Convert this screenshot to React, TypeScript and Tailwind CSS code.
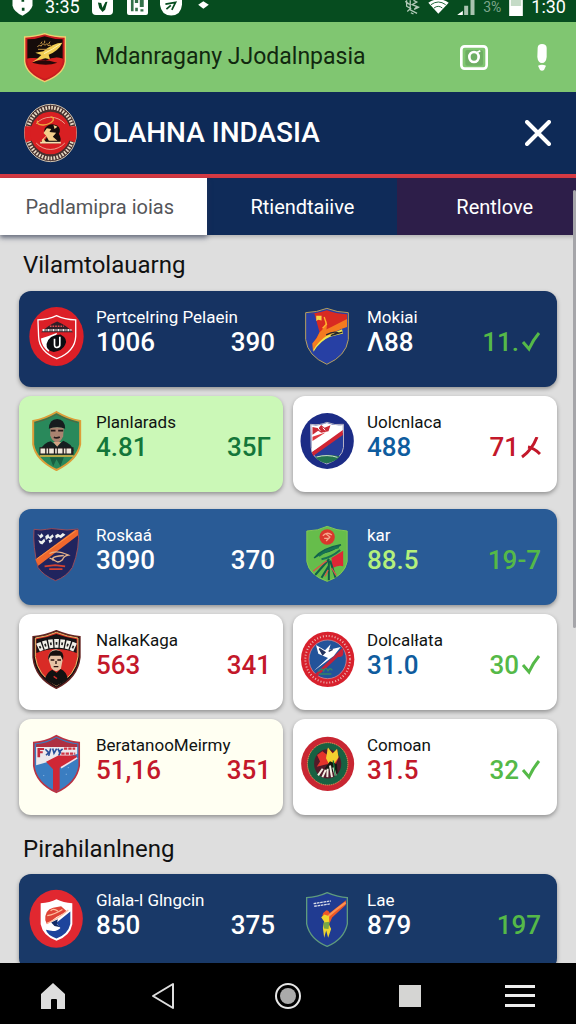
import type { ReactNode } from "react";

type Tone = "white" | "green" | "lime" | "forest" | "blue" | "red";

const toneClass: Record<Tone, string> = {
  white: "text-white",
  green: "text-[#55b948]",
  lime: "text-[#b4f07c]",
  forest: "text-[#14763a]",
  blue: "text-[#0f5c9e]",
  red: "text-[#c3182a]",
};

function Crest({ box, w, h, children }: { box: string; w: number; h: number; children: ReactNode }) {
  return (
    <svg viewBox={box} width={w} height={h} fill="none" aria-hidden="true" className="shrink-0 overflow-visible">
      {children}
    </svg>
  );
}

const AppCrest = () => (
  <Crest box="72 95 126 147" w={42} h={49}>
    <path d="M74 107Q108 106 134 97Q162 107 196 107V180Q192 218 134 241Q78 218 74 180Z" fill="#c81c20" stroke="#f0cf70" strokeWidth="4" />
    <path d="M82 114Q110 114 134 105Q160 114 188 114V172Q164 162 138 178Q110 166 82 172Z" fill="#150c0a" />
    <path d="M82 172Q108 166 134 180Q160 164 188 172Q188 214 134 232Q82 214 82 172Z" fill="#d9221f" />
    <path d="M96 184Q120 170 172 184Q140 196 96 184Z" fill="#260809" />
    <path d="M96 183Q110 176 124 161L106 154L130 150Q160 124 187 124Q176 148 146 160L150 174L136 171Q120 174 96 183Z" fill="#f3cf54" />
    <path d="M132 157Q160 143 181 128" stroke="#fff4b4" strokeWidth="3" />
    <path d="M112 136q6-7 12-2q4-12 11-2q8-10 9 1q8-5 11 3M114 144h36M122 128l4-7M134 126v-8M146 128l4-7" stroke="#c79848" strokeWidth="3" />
  </Crest>
);

const LeagueCrest = () => (
  <Crest box="72 45 158 174" w={53} h={58}>
    <ellipse cx="151" cy="132" rx="78" ry="86" fill="#46302f" stroke="#d2c5b2" strokeWidth="3" />
    <ellipse cx="151" cy="132" rx="69" ry="76" stroke="#e6d9c4" strokeWidth="11" strokeDasharray="5 4" />
    <path d="M75 112A78 86 0 0 0 77 160L104 152V112ZM227 112A78 86 0 0 1 225 160L198 152V112Z" fill="#d81f22" />
    <ellipse cx="151" cy="132" rx="60" ry="64" fill="#d81f22" />
    <path d="M108 104A60 64 0 0 1 194 104M108 162A60 64 0 0 0 194 162" stroke="#eee0c0" strokeWidth="2" />
    <path d="M112 95q-4 14 18 13q20-2 29-14q3-10-8-10" stroke="#eda53c" strokeWidth="4" />
    <path d="M134 118Q150 98 172 110Q184 120 176 134Q186 150 178 163H126L122 158Q142 152 140 140Q128 132 134 118Z" fill="#160d0b" />
    <path d="M140 118l13 2-5 9 20 2-10 12 14 12h-26l-7-13-8 9 8 10h-14v-9l13-12-8-8zM160 108l12 5-9 7z" fill="#f3cf8b" />
    <path d="M120 161h62" stroke="#f3e0b0" strokeWidth="5" />
  </Crest>
);

const RedNote = () => (
  <Crest box="84 62 164 178" w={55} h={59}>
    <ellipse cx="166" cy="151" rx="82" ry="89" fill="#dc1f27" />
    <path d="M110 101Q142 100 166 88Q190 100 224 101V150Q222 196 167 218Q113 196 112 150Z" fill="#dc1f27" stroke="#fff" strokeWidth="4" />
    <path d="M120 138Q140 118 168 106Q196 118 216 138Z" fill="#301f27" />
    <path d="M124 132h88" stroke="#eee" strokeWidth="7" strokeDasharray="6 3 3 3" />
    <path d="M146 120h42" stroke="#e74c50" strokeWidth="5" strokeDasharray="5 3" />
    <path d="M119 157Q144 150 168 140L142 197Q120 180 119 157Z" fill="#fff" />
    <path d="M136 174Q142 146 178 145Q202 158 192 176Q184 194 158 198Q134 194 136 174Z" fill="#0b0c11" />
    <path d="M160 158v18q0 9 8 8q9-1 8-10v-22" stroke="#fff" strokeWidth="5" />
  </Crest>
);

const Flame = () => (
  <Crest box="54 71 133 172" w={44} h={57}>
    <path d="M56 85Q90 84 120 72Q150 84 185 85V166Q178 216 120 241Q62 216 56 166Z" fill="#2740a4" stroke="#b8a15d" strokeWidth="3" />
    <path d="M74 88Q98 86 120 78Q146 88 181 90V116L76 180Q86 154 76 140Z" fill="#d82a22" />
    <path d="M60 90Q70 90 82 87L98 144L76 184Q60 172 60 150Z" fill="#2740a4" />
    <path d="M76 178Q92 162 98 144Q112 136 118 108Q122 130 118 136Q142 124 181 104V128Q148 138 132 152Q104 166 78 200Z" fill="#f47b20" />
    <path d="M79 198Q96 170 120 155L166 135L169 148L130 158Q100 170 80 203Z" fill="#f2e64c" />
    <path d="M88 94h16v15l-10-3-6 4z" fill="#f3d44a" />
    <path d="M118 152q22-12 34-7l-20 9 35-10" stroke="#262530" strokeWidth="4" />
    <path d="M112 98l7 22-12 12" stroke="#ffb22e" strokeWidth="4" />
  </Crest>
);

const GreenSoldier = () => (
  <Crest box="95 381 146 180" w={49} h={60}>
    <path d="M98 411Q134 404 168 384Q202 404 239 411V481Q230 528 168 558Q106 528 98 481Z" fill="#29895b" stroke="#dd9d38" strokeWidth="6" />
    <path d="M104 416Q138 408 168 391Q200 408 232 416" stroke="#704e29" strokeWidth="2" />
    <path d="M118 500Q130 476 151 472L170 486L188 470Q212 478 220 500Z" fill="#152020" />
    <path d="M149 430H190L188 457Q180 476 169 476Q155 474 149 454Z" fill="#a98370" />
    <path d="M145 434Q146 406 170 405Q193 406 194 434Q170 424 145 434Z" fill="#171c1e" />
    <path d="M151 440h14m8 0h15M160 460q9 4 18-1" stroke="#271b1b" strokeWidth="5" />
    <path d="M158 474l12 14 12-14" fill="#d5a283" />
    <path d="M117 501h102" stroke="#221b1b" strokeWidth="22" />
    <path d="M120 501h96" stroke="#f1e9dc" strokeWidth="15" strokeDasharray="14 4 5 3" />
    <path d="M118 516h101" stroke="#e4b443" strokeWidth="5" />
    <path d="M148 520L158 547L168 526L180 547L190 520Z" fill="#195f40" />
  </Crest>
);

const BlueShield = () => (
  <Crest box="39 383 161 168" w={54} h={56}>
    <ellipse cx="120" cy="467" rx="80" ry="84" fill="#1c2c86" />
    <path d="M70 417Q98 421 119 411Q142 421 169 417V486Q166 518 119 536Q72 518 72 486Z" fill="#263d9a" stroke="#b8b5c5" strokeWidth="3" />
    <path d="M72 419Q98 423 119 413Q142 422 167 419V442L74 501Z" fill="#fff" />
    <path d="M74 501L167 434V449L78 512Z" fill="#cf2534" />
    <path d="M76 425l18 4 8-10 10 8 18-7-6 18-22 4-9-6-17 12z" fill="#cb2b36" />
    <path d="M76 454l40-13-40 26z" fill="#df3940" />
    <path d="M92 427l7 9m8-9l7 8" stroke="#fff" strokeWidth="3" />
    <path d="M84 515Q120 502 158 513Q146 529 119 534Q94 530 84 515Z" fill="#23734f" />
    <path d="M88 515q32-9 63 1" stroke="#d1ddd0" strokeWidth="3" />
  </Crest>
);

const NavyStripe = () => (
  <Crest box="102 95 137 160" w={46} h={53}>
    <path d="M104 99Q126 103 142 99Q158 95 171 98Q204 104 237 98Q244 154 220 214Q202 242 169 254Q132 238 116 214Q100 150 104 99Z" fill="#20245e" stroke="#984c5a" strokeWidth="3" />
    <path d="M108 190L228 101H237V117L117 209Z" fill="#ef672d" />
    <path d="M113 188L230 104" stroke="#f79245" strokeWidth="3" />
    <path d="M114 112l8 6 5-7 6 8-9 8zM138 120l9-7 4 9 9-8 4 7-10 9-6-5-8 6zM168 118l8-6 7 5 8-7 8 5-14 11-6-4-9 5zM117 132l10 3 8-8 3 8-9 10-7-3zM148 132l9-3 3 5-9 7z" fill="#edf0ee" />
    <path d="M151 172Q172 160 208 177Q195 179 190 191Q174 206 160 187Q162 180 194 178M151 186q8 2 12 7" stroke="#e3b18a" strokeWidth="4" />
    <path d="M136 211l32-4 30 4M150 219h40" stroke="#d54331" strokeWidth="5" />
  </Crest>
);

const GreenShield = () => (
  <Crest box="56 84 125 168" w={42} h={56}>
    <path d="M58 99Q91 99 119 85Q148 98 179 99V191Q171 232 119 250Q65 232 58 191Z" fill="#66bd4b" stroke="#83c854" strokeWidth="3" />
    <circle cx="119" cy="117" r="23" fill="#da372c" />
    <path d="M106 113q13-13 27-2M115 107l12 10-11 12M110 121h16" stroke="#f7a68c" strokeWidth="4" />
    <path d="M80 180Q104 150 160 140Q139 157 111 164Q97 168 80 180Z" fill="#166f59" stroke="#12614b" strokeWidth="4" />
    <path d="M94 174Q120 154 154 148M102 184Q132 178 158 156" stroke="#177353" strokeWidth="6" />
    <path d="M132 180L167 158V205Q153 199 134 211Z" fill="#df2735" />
    <path d="M83 231L125 183M124 188V247M128 188L144 239M102 239L124 203" stroke="#115d49" strokeWidth="6" />
    <path d="M77 220L118 188M112 235L122 216M132 210L146 232" stroke="#df5147" strokeWidth="4" />
  </Crest>
);

const BlackPortrait = () => (
  <Crest box="95 395 147 177" w={49} h={59}>
    <path d="M98 415Q134 412 168 397Q204 412 239 415V477Q232 539 168 570Q104 539 98 477Z" fill="#1b1113" stroke="#642321" strokeWidth="4" />
    <path d="M105 419Q138 415 168 402Q201 415 233 419V475Q226 532 168 562Q111 530 105 475Z" fill="#d92b26" stroke="#eaba69" strokeWidth="3" />
    <path d="M108 464V423Q140 418 168 407Q200 418 229 423V464Q168 440 108 464Z" fill="#151315" />
    <path d="M113 448Q168 422 225 448" stroke="#f1efe7" strokeWidth="26" strokeDasharray="13 4" />
    <path d="M117 448Q168 422 221 448" stroke="#222" strokeWidth="8" strokeDasharray="5 12" />
    <path d="M134 540Q142 519 156 514L169 523L181 512Q198 520 202 540Q190 554 168 562Q145 551 134 540Z" fill="#111" />
    <path d="M144 481Q144 455 167 453Q190 457 187 484L182 510Q167 528 153 509Z" fill="#e6c3a5" />
    <path d="M143 486Q143 455 168 456Q194 456 188 486L181 472H151Z" fill="#16100e" />
    <path d="M151 485h11m9 0h11M160 505h14M167 488v9" stroke="#28130f" strokeWidth="4" />
    <path d="M160 534l10 7" stroke="#d62f2c" strokeWidth="4" />
  </Crest>
);

const RedSeal = () => (
  <Crest box="39 397 159 165" w={53} h={55}>
    <ellipse cx="119" cy="479" rx="80" ry="83" fill="#d8212d" />
    <ellipse cx="119" cy="479" rx="67" ry="70" stroke="#eab6b5" strokeWidth="6" strokeDasharray="3 6" />
    <ellipse cx="119" cy="479" rx="56" ry="58" fill="#23539a" stroke="#e6999a" strokeWidth="2" />
    <path d="M78 527L164 444Q172 475 150 472L86 532Z" fill="#c52239" />
    <path d="M77 514L120 475L91 462L84 436L111 452L128 434L123 450L158 442L137 469Z" fill="#fff" />
    <path d="M94 447l17 11-7 7zM122 455l12-6" fill="#24345e" stroke="#24345e" strokeWidth="4" />
    <path d="M91 516q10-14 16-2q6-15 13-1q6-11 13-1M92 523h38" stroke="#368464" strokeWidth="4" />
  </Crest>
);

const RedBlueShield = () => (
  <Crest box="97 75 141 175" w={47} h={58}>
    <path d="M99 98Q136 95 167 77Q202 95 236 98V168Q228 220 167 248Q106 220 99 168Z" fill="#3a7dc1" stroke="#ba3343" strokeWidth="5" />
    <path d="M106 103Q140 100 167 83Q198 100 230 103V112H106Z" fill="#ae3041" />
    <path d="M106 111H230V132L106 166Z" fill="#ece9ec" />
    <path d="M110 114v28h8v-12h8v-6h-8v-4h12v-6z" fill="#c22b3d" />
    <path d="M134 118l10 10-8 8m14-20l-6 22m12-22l4 14 8-14m4 0l4 10 10-9m-6 8l-6 12" stroke="#29509a" strokeWidth="5" />
    <path d="M190 116h34M182 131h42" stroke="#cf3444" strokeWidth="7" strokeDasharray="10 3" />
    <path d="M136 156L173 137H228V148L177 174V239L167 245L157 240V178Z" fill="#cf2735" />
    <path d="M181 174L230 144" stroke="#f0e6ed" strokeWidth="5" />
    <path d="M203 172v3M197 192v3M129 196v3" stroke="#92bbe5" strokeWidth="3" />
  </Crest>
);

const GreenSeal = () => (
  <Crest box="39 78 159 163" w={53} h={54}>
    <ellipse cx="119" cy="159" rx="80" ry="82" fill="#c82632" />
    <ellipse cx="119" cy="159" rx="61" ry="64" fill="#176142" stroke="#dc9d59" strokeWidth="3" strokeDasharray="4 2" />
    <ellipse cx="119" cy="159" rx="41" ry="44" fill="#501b2a" />
    <path d="M87 132L103 121L119 133L117 112L135 126L148 114L151 143L140 166L116 160L86 168L96 152Z" fill="#e5332b" />
    <path d="M114 142L120 110L134 128L147 114L152 139L139 158L122 158Z" fill="#f4cf2f" />
    <path d="M110 173L126 151L147 160L149 188L119 178Z" fill="#151712" />
    <path d="M90 194L104 174M103 199L113 177M118 199L119 174M132 199L126 164M143 194L136 170" stroke="#f2eee1" strokeWidth="6" />
    <path d="M136 149L142 195" stroke="#14773d" strokeWidth="4" />
  </Crest>
);

const RedCircleShield = () => (
  <Crest box="83 72 163 176" w={54} h={58}>
    <ellipse cx="165" cy="159" rx="81" ry="88" fill="#e12830" />
    <path d="M118 112Q146 111 166 100Q187 111 214 112V176Q207 212 166 226Q125 212 118 176Z" fill="#fff" />
    <path d="M208 137V175Q201 206 166 219Q137 209 134 193Q165 202 178 187L165 172Z" fill="#1d449c" />
    <path d="M132 164Q130 132 156 126L180 121L198 137L166 154L137 176Z" fill="#df4436" />
    <path d="M137 173Q166 163 202 133M138 150Q160 146 184 131M148 135q9-9 22 1" stroke="#ffbe9e" strokeWidth="4" />
    <path d="M150 171L170 161L167 176L178 185L160 181Z" fill="#112a65" />
  </Crest>
);

const FigureShield = () => (
  <Crest box="54 81 127 166" w={42} h={55}>
    <path d="M56 98Q88 97 118 83Q151 97 179 98V177Q169 224 118 245Q66 224 56 177Z" fill="#203b91" stroke="#5f9b7d" strokeWidth="4" />
    <path d="M77 116l52-8m-50 16l47-7" stroke="#dce1eb" strokeWidth="4" strokeDasharray="8 2" />
    <path d="M108 165Q98 147 112 139Q119 131 126 144L175 106L174 120L133 158L126 174Z" fill="#ed5827" />
    <path d="M121 154Q146 132 174 113" stroke="#fb9150" strokeWidth="6" />
    <path d="M100 157L110 149L124 154V180L130 193L121 219L115 197L109 219L105 189L109 171Z" fill="#efd62e" />
    <path d="M107 173l18-2-3 22-14-2z" fill="#79a646" />
  </Crest>
);

const Check = () => (
  <svg viewBox="0 0 20 22" width="20" height="22" fill="none" role="img" aria-label="Up" className="shrink-0">
    <path d="M2 10L8 17Q12 8 18 1" stroke="currentColor" strokeWidth="3" />
  </svg>
);

const Cross = () => (
  <svg viewBox="0 0 20 22" width="20" height="22" fill="none" role="img" aria-label="Down" className="shrink-0">
    <path d="M1 20Q11 13 16 0M7 10Q13 11 19 17" stroke="currentColor" strokeWidth="3" />
  </svg>
);

type Team = {
  name: string;
  crest: ReactNode;
  value: string;
  valueTone: Tone;
  score: string;
  scoreTone: Tone;
  mark?: "check" | "cross";
};

function TeamCell({ team, side, light, wide, surface }: { team: Team; side: "left" | "right"; light: boolean; wide: boolean; surface: string }) {
  return (
    <article className={`flex h-24 min-w-0 items-center gap-3 ${side === "left" ? "pl-[9px]" : "pl-1.5"} ${side === "left" && wide ? "pr-2" : side === "left" ? "pr-3" : "pr-4"} ${surface}`}>
      <div className="flex w-14 shrink-0 justify-center pb-1.5">{team.crest}</div>
      <div className="h-full min-w-0 flex-1 pt-3.5">
        <h3 className={`text-[17px] leading-6 whitespace-nowrap ${light ? "text-white" : "text-[#101312]"}`}>{team.name}</h3>
        <div className="flex items-center justify-between text-[26px] leading-[27px] font-medium">
          <span className={toneClass[team.valueTone]}>{team.value}</span>
          <span className={`flex items-center ${team.mark ? "gap-0.5" : ""} ${toneClass[team.scoreTone]}`}>
            {team.score}
            {team.mark === "check" && <Check />}
            {team.mark === "cross" && <Cross />}
          </span>
        </div>
      </div>
    </article>
  );
}

function WideRow({ color, teams }: { color: string; teams: [Team, Team] }) {
  return (
    <div className={`grid grid-cols-2 gap-2.5 rounded-xl shadow-[0_2px_4px_rgba(0,0,0,0.35)] ${color}`}>
      <TeamCell team={teams[0]} side="left" light wide surface="" />
      <TeamCell team={teams[1]} side="right" light wide surface="" />
    </div>
  );
}

function SplitRow({ color, teams }: { color: string; teams: [Team, Team] }) {
  const card = "rounded-xl shadow-[0_2px_4px_rgba(0,0,0,0.35)]";
  return (
    <div className="grid grid-cols-2 gap-2.5">
      <TeamCell team={teams[0]} side="left" light={false} wide={false} surface={`${card} ${color}`} />
      <TeamCell team={teams[1]} side="right" light={false} wide={false} surface={`${card} bg-white`} />
    </div>
  );
}

function StatusBar() {
  return (
    <div className="flex h-[22px] shrink-0 items-start justify-between bg-[#064c1f] pr-2.5 pl-3 text-white">
      <div className="flex items-start gap-3">
        <svg viewBox="37 0 62 48" width="21" height="16" aria-hidden="true">
          <path d="M38 0H98V17Q94 33 68 47Q42 35 38 17Z" fill="white" />
          <path d="M65 0h8v5h-8zM66 23h8v9h-8z" fill="#064c1f" />
        </svg>
        <span className="text-lg leading-[14px]">3:35</span>
        <svg viewBox="268 0 64 45" width="21" height="15" aria-hidden="true">
          <path d="M268 0H332V33Q332 45 320 45H280Q268 45 268 33Z" fill="white" />
          <path d="M286 7l10 2 4 14 9-17 6-1-7 24-8 7-10-12z" fill="#064c1f" />
        </svg>
        <svg viewBox="375 0 64 45" width="21" height="15" className="ml-0.5" aria-hidden="true">
          <path d="M375 0H439V39Q439 45 433 45H381Q375 45 375 39Z" fill="white" />
          <path d="M387 0h8v34h-8zM399 0h10v9h-10zM414 0h12v21h-12zM400 23h8v11h-8zM416 28h9v7h-9z" fill="#33714a" />
        </svg>
        <svg viewBox="478 0 65 47" width="22" height="16" aria-hidden="true">
          <path d="M478 0H543V14Q540 45 511 46Q482 45 478 14Z" fill="white" />
          <path d="M494 12L524 7L513 29M510 16L497 27" stroke="#064c1f" strokeWidth="5" fill="none" />
        </svg>
        <svg viewBox="597 0 33 28" width="11" height="9" className="ml-1" aria-hidden="true">
          <path d="M613 4L630 15L613 27L597 15Z" fill="white" />
        </svg>
      </div>
      <div className="flex items-start gap-2">
        <svg viewBox="328 0 46 44" width="15" height="15" fill="none" stroke="#b3cbb9" strokeWidth="4" aria-hidden="true">
          <path d="M329 3L342 13M333 0V18L345 25L335 34M344 0V29L365 40M354 0L364 5L350 13L365 19L356 28L372 20M346 38L354 42" />
        </svg>
        <svg viewBox="407 0 61 42" width="21" height="14" aria-hidden="true">
          <path d="M407 8Q438-12 468 8L437 41Z" fill="white" />
          <path d="M415 14Q437-2 459 14M424 24Q437 14 449 24" stroke="#23693d" strokeWidth="3" fill="none" />
        </svg>
        <svg viewBox="491 0 53 45" width="18" height="15" aria-hidden="true">
          <path d="M491 45L508 32V45Z" fill="white" />
          <path d="M512 17h12v28h-12zM531 0h12v45h-12z" fill="#a9c3b0" />
        </svg>
        <span className="text-sm leading-[15px] text-[#7da68b]">3%</span>
        <svg viewBox="651 0 41 48" width="14" height="16" aria-hidden="true">
          <path d="M651 0h41v48h-41z" fill="white" />
          <path d="M656 0h31v18h-31z" fill="#c5dbc7" />
        </svg>
        <span className="text-lg leading-[14px]">1:30</span>
      </div>
    </div>
  );
}

const NavButton = ({ label, children }: { label: string; children: ReactNode }) => (
  <button type="button" aria-label={label} className="flex h-12 items-center justify-center">
    {children}
  </button>
);

export default function App() {
  return (
    <div className="flex h-screen flex-col overflow-hidden bg-[#dedede] font-[Roboto,sans-serif]">
      <StatusBar />
      <header className="flex h-[70px] shrink-0 items-center bg-[#80c671] pr-5 pl-6">
        <AppCrest />
        <h1 className="ml-[29px] flex-1 text-[23px] whitespace-nowrap text-[#11280f]">Mdanragany JJodalnpasia</h1>
        <button type="button" aria-label="Camera" className="mr-[34px] flex h-10 w-10 items-center justify-center">
          <svg viewBox="516 129 84 75" width="28" height="25" fill="none" aria-hidden="true">
            <rect x="520" y="133" width="76" height="67" rx="10" stroke="white" strokeWidth="8" />
            <path d="M532 149q0-5 5-5h42q6 0 6 6v35q0 6-6 6h-42q-5 0-5-6z" fill="#6eae64" />
            <ellipse cx="558" cy="165" rx="14" ry="15" stroke="white" strokeWidth="8" />
            <path d="M568 151l9-5" stroke="white" strokeWidth="5" />
          </svg>
        </button>
        <button type="button" aria-label="Alerts" className="flex h-10 w-7 items-center justify-center">
          <svg viewBox="748 126 28 81" width="10" height="27" fill="white" aria-hidden="true">
            <path d="M749 137Q750 126 762 126Q775 126 776 137V165Q774 183 762 183Q750 183 748 165ZM750 191Q762 186 774 191L768 204Q762 209 756 204Z" />
          </svg>
        </button>
      </header>
      <div className="flex h-[86px] shrink-0 items-center border-b-4 border-[#d53a43] bg-[#0e2a57] pr-[22px] pl-6">
        <LeagueCrest />
        <h2 className="ml-4 flex-1 text-[28px] font-medium whitespace-nowrap text-white">OLAHNA INDASIA</h2>
        <button type="button" aria-label="Close" className="flex h-8 w-8 items-center justify-center">
          <svg viewBox="0 0 26 26" width="26" height="26" fill="none" aria-hidden="true">
            <path d="M2 2L24 24M24 2L2 24" stroke="white" strokeWidth="4" strokeLinecap="round" />
          </svg>
        </button>
      </div>
      <div className="relative flex min-h-0 flex-1 flex-col">
        <div role="tablist" className="flex h-[57px] shrink-0 bg-[#0f2b59] text-xl text-white shadow-[0_2px_4px_rgba(0,0,0,0.2)]">
          <button type="button" role="tab" aria-selected="true" className="w-[36%] bg-white pr-2 text-[#55565a] shadow-[0_3px_5px_rgba(50,60,90,0.55)]">
            Padlamipra ioias
          </button>
          <button type="button" role="tab" aria-selected="false" className="w-[33%]">
            Rtiendtaiive
          </button>
          <button type="button" role="tab" aria-selected="false" className="flex-1 bg-[#2d1e49] pl-4">
            Rentlove
          </button>
        </div>
        <main className="min-h-0 flex-1 overflow-hidden px-[19px]">
          <h2 className="flex h-14 items-center pt-1 pl-1 text-2xl text-[#111]">Vilamtolauarng</h2>
          <section className="flex flex-col gap-[9px]">
            <WideRow
              color="bg-[#163362]"
              teams={[
                { name: "Pertcelring Pelaein", crest: <RedNote />, value: "1006", valueTone: "white", score: "390", scoreTone: "white" },
                { name: "Mokiai", crest: <Flame />, value: "Λ88", valueTone: "white", score: "11.", scoreTone: "green", mark: "check" },
              ]}
            />
            <SplitRow
              color="bg-[#cbf8b7]"
              teams={[
                { name: "Planlarads", crest: <GreenSoldier />, value: "4.81", valueTone: "forest", score: "35Γ", scoreTone: "forest" },
                { name: "Uolcnlaca", crest: <BlueShield />, value: "488", valueTone: "blue", score: "71", scoreTone: "red", mark: "cross" },
              ]}
            />
            <div className="pt-2">
              <WideRow
                color="bg-[#295b96]"
                teams={[
                  { name: "Roskaá", crest: <NavyStripe />, value: "3090", valueTone: "white", score: "370", scoreTone: "white" },
                  { name: "kar", crest: <GreenShield />, value: "88.5", valueTone: "lime", score: "19-7", scoreTone: "green" },
                ]}
              />
            </div>
            <SplitRow
              color="bg-white"
              teams={[
                { name: "NalkaKaga", crest: <BlackPortrait />, value: "563", valueTone: "red", score: "341", scoreTone: "red" },
                { name: "Dolcalłata", crest: <RedSeal />, value: "31.0", valueTone: "blue", score: "30", scoreTone: "green", mark: "check" },
              ]}
            />
            <SplitRow
              color="bg-[#fffff2]"
              teams={[
                { name: "BeratanooMeirmy", crest: <RedBlueShield />, value: "51,16", valueTone: "red", score: "351", scoreTone: "red" },
                { name: "Comoan", crest: <GreenSeal />, value: "31.5", valueTone: "red", score: "32", scoreTone: "green", mark: "check" },
              ]}
            />
          </section>
          <h2 className="flex h-[59px] items-center pt-2 pl-1 text-2xl text-[#111]">Pirahilanlneng</h2>
          <WideRow
            color="bg-[#193968]"
            teams={[
              { name: "Glala-l Glngcin", crest: <RedCircleShield />, value: "850", valueTone: "white", score: "375", scoreTone: "white" },
              { name: "Lae", crest: <FigureShield />, value: "879", valueTone: "white", score: "197", scoreTone: "green" },
            ]}
          />
        </main>
        <div aria-hidden="true" className="absolute top-3 right-0 h-[438px] w-[3px] rounded-sm bg-[#a5a5a9]" />
      </div>
      <nav className="grid h-[61px] shrink-0 grid-cols-[106fr_114fr_136fr_108fr_112fr] items-center bg-black pt-1">
        <NavButton label="Home">
          <svg viewBox="0 0 26 28" width="26" height="28" fill="#dedede" aria-hidden="true">
            <path d="M13 1L25 12V27H17V18Q17 17 16 17H12Q11 17 11 18V27H1V12Z" />
          </svg>
        </NavButton>
        <NavButton label="Back">
          <svg viewBox="0 0 24 28" width="24" height="28" fill="none" aria-hidden="true">
            <path d="M22 2V26L2 14Z" stroke="#dedede" strokeWidth="2" strokeLinejoin="round" />
          </svg>
        </NavButton>
        <NavButton label="Recent">
          <svg viewBox="0 0 28 28" width="28" height="28" fill="none" aria-hidden="true">
            <circle cx="14" cy="14" r="12" stroke="#e6e6e6" strokeWidth="2" />
            <circle cx="14" cy="14" r="8" fill="#aaa" />
          </svg>
        </NavButton>
        <NavButton label="Stop">
          <svg viewBox="0 0 22 22" width="22" height="22" aria-hidden="true">
            <rect width="22" height="22" fill="#d5d5d3" />
          </svg>
        </NavButton>
        <NavButton label="Menu">
          <svg viewBox="0 0 30 24" width="30" height="24" aria-hidden="true">
            <path d="M0 1h30v3H0zM0 10h30v3H0zM0 20h30v3H0z" fill="#eee" />
          </svg>
        </NavButton>
      </nav>
    </div>
  );
}
